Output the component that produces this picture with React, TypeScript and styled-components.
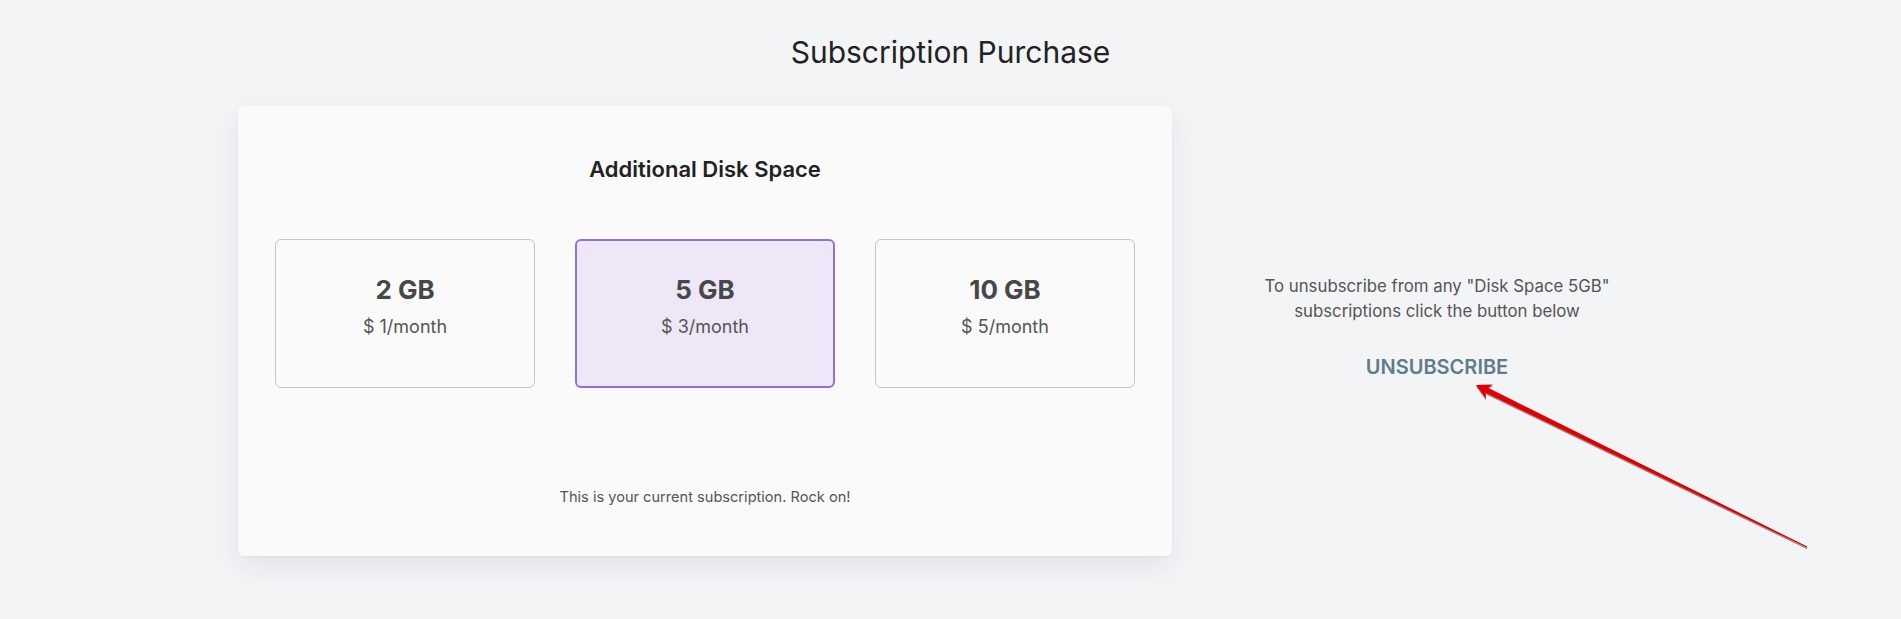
import styled, { createGlobalStyle } from "styled-components";

const GlobalStyle = createGlobalStyle`
  html, body {
    margin: 0;
    padding: 0;
    background-color: #f3f4f6;
    font-family: Inter, "Noto Sans", sans-serif;
  }
`;

const plans = [
  { size: "2 GB", price: "$ 1/month", selected: false },
  { size: "5 GB", price: "$ 3/month", selected: true },
  { size: "10 GB", price: "$ 5/month", selected: false },
];

export default function App() {
  return (
    <>
      <GlobalStyle />
      <Page>
        <Title>Subscription Purchase</Title>
        <Row>
          <Card>
            <CardHeading>Additional Disk Space</CardHeading>
            <PlanGrid>
              {plans.map((plan) => (
                <PlanBox key={plan.size} $selected={plan.selected}>
                  <PlanSize>{plan.size}</PlanSize>
                  <PlanPrice>{plan.price}</PlanPrice>
                </PlanBox>
              ))}
            </PlanGrid>
            <CurrentNote>This is your current subscription. Rock on!</CurrentNote>
          </Card>
          <Side>
            <SideText>
              To unsubscribe from any "Disk Space 5GB"
              <br />
              subscriptions click the button below
            </SideText>
            <UnsubscribeBtn type="button">UNSUBSCRIBE</UnsubscribeBtn>
          </Side>
        </Row>
        {/* annotation arrow drawn over the page */}
        <Arrow viewBox="0 0 1901 619" width="1901" height="619">
          <polygon
            points="1476,386.5 1493,385.9 1488,389.3 1807.3,548 1806.7,549 1485.6,394.3 1486,400.3"
            fill="rgba(60,0,0,0.45)"
          />
          <polygon
            points="1476,385 1493,384.4 1488,387.8 1807.3,546.5 1806.7,547.5 1485.6,392.8 1486,398.8"
            fill="#e00000"
          />
        </Arrow>
      </Page>
    </>
  );
}

const Page = styled.div`
  position: relative;
  width: 1901px;
  height: 619px;
  padding-top: 32px;
  box-sizing: border-box;
  overflow: hidden;
`;

const Title = styled.h1`
  margin: 0;
  font-size: 30px;
  line-height: 40px;
  font-weight: 400;
  color: #222;
  text-align: center;
`;

const Row = styled.div`
  display: flex;
  align-items: flex-start;
  padding-left: 238px;
  margin-top: 34px;
`;

const Card = styled.div`
  width: 934px;
  height: 450px;
  box-sizing: border-box;
  padding: 49px 0 0;
  background-color: #fafafa;
  border-radius: 6px;
  box-shadow: 0 10px 28px rgba(40, 40, 60, 0.08), 0 1px 3px rgba(0, 0, 0, 0.04);
  text-align: center;
`;

const CardHeading = styled.h2`
  margin: 0;
  font-size: 22px;
  line-height: 28px;
  font-weight: 600;
  color: #222;
`;

const PlanGrid = styled.div`
  display: grid;
  grid-template-columns: repeat(3, 260px);
  justify-content: center;
  gap: 40px;
  margin-top: 56px;
`;

const PlanBox = styled.div<{ $selected: boolean }>`
  height: 149px;
  box-sizing: border-box;
  padding-top: ${({ $selected }) => ($selected ? "33px" : "34px")};
  border: ${({ $selected }) => ($selected ? "2px solid #9370db" : "1px solid #c6c6c6")};
  border-radius: 6px;
  background-color: ${({ $selected }) => ($selected ? "#ede7f8" : "transparent")};
`;

const PlanSize = styled.div`
  font-size: 26px;
  line-height: 32px;
  font-weight: 700;
  color: #474747;
`;

const PlanPrice = styled.div`
  margin-top: 9px;
  font-size: 18px;
  line-height: 24px;
  color: #555;
`;

const CurrentNote = styled.p`
  margin: 97px 0 0;
  font-size: 14.6px;
  line-height: 24px;
  color: #555;
`;

const Side = styled.div`
  width: 530px;
  padding-top: 168px;
  display: flex;
  flex-direction: column;
  align-items: center;
`;

const SideText = styled.p`
  margin: 0;
  font-size: 16.8px;
  line-height: 25px;
  color: #555;
  text-align: center;
`;

const UnsubscribeBtn = styled.button`
  margin-top: 31px;
  padding: 0;
  border: none;
  background: none;
  font-family: inherit;
  font-size: 20px;
  line-height: 24px;
  font-weight: 600;
  color: #607d8b;
  cursor: pointer;
`;

const Arrow = styled.svg`
  position: absolute;
  top: 0;
  left: 0;
  pointer-events: none;
`;
